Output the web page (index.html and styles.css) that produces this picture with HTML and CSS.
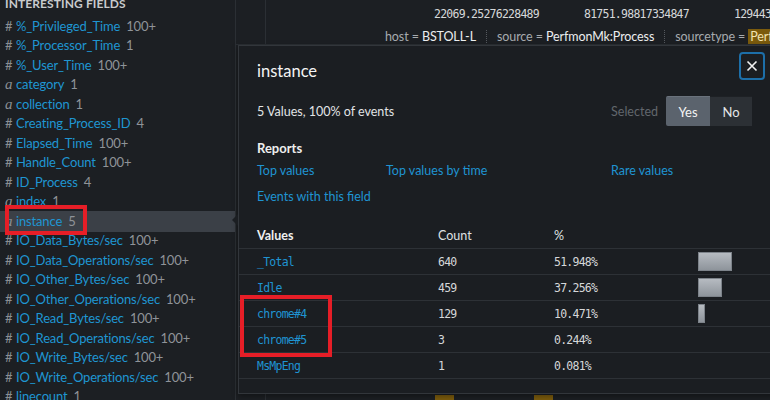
FILE: index.html
```html
<!DOCTYPE html>
<html>
<head>
<meta charset="utf-8">
<link rel="stylesheet" href="styles.css">
</head>
<body>
<div class="app">
  <aside class="sidebar">
    <div class="sb-title">Interesting Fields</div>
    <ul class="fields">
      <li class="field"><span class="ftype">#</span><span class="fname">%_Privileged_Time</span><span class="fcount">100+</span></li>
      <li class="field"><span class="ftype">#</span><span class="fname">%_Processor_Time</span><span class="fcount">1</span></li>
      <li class="field"><span class="ftype">#</span><span class="fname">%_User_Time</span><span class="fcount">100+</span></li>
      <li class="field"><span class="ftype str">a</span><span class="fname">category</span><span class="fcount">1</span></li>
      <li class="field"><span class="ftype str">a</span><span class="fname">collection</span><span class="fcount">1</span></li>
      <li class="field"><span class="ftype">#</span><span class="fname">Creating_Process_ID</span><span class="fcount">4</span></li>
      <li class="field"><span class="ftype">#</span><span class="fname">Elapsed_Time</span><span class="fcount">100+</span></li>
      <li class="field"><span class="ftype">#</span><span class="fname">Handle_Count</span><span class="fcount">100+</span></li>
      <li class="field"><span class="ftype">#</span><span class="fname">ID_Process</span><span class="fcount">4</span></li>
      <li class="field"><span class="ftype str">a</span><span class="fname">index</span><span class="fcount">1</span></li>
      <li class="field selected"><span class="ftype str">a</span><span class="fname">instance</span><span class="fcount">5</span><span class="annot annot-side"></span></li>
      <li class="field"><span class="ftype">#</span><span class="fname">IO_Data_Bytes/sec</span><span class="fcount">100+</span></li>
      <li class="field"><span class="ftype">#</span><span class="fname">IO_Data_Operations/sec</span><span class="fcount">100+</span></li>
      <li class="field"><span class="ftype">#</span><span class="fname">IO_Other_Bytes/sec</span><span class="fcount">100+</span></li>
      <li class="field"><span class="ftype">#</span><span class="fname">IO_Other_Operations/sec</span><span class="fcount">100+</span></li>
      <li class="field"><span class="ftype">#</span><span class="fname">IO_Read_Bytes/sec</span><span class="fcount">100+</span></li>
      <li class="field"><span class="ftype">#</span><span class="fname">IO_Read_Operations/sec</span><span class="fcount">100+</span></li>
      <li class="field"><span class="ftype">#</span><span class="fname">IO_Write_Bytes/sec</span><span class="fcount">100+</span></li>
      <li class="field"><span class="ftype">#</span><span class="fname">IO_Write_Operations/sec</span><span class="fcount">100+</span></li>
      <li class="field"><span class="ftype">#</span><span class="fname">linecount</span><span class="fcount">1</span></li>
    </ul>
  </aside>

  <main class="main">
    <div class="event">
      <div class="gutter"></div>
      <div class="event-body">
        <div class="nums">
          <span class="num">22069.25276228489</span>
          <span class="num">81751.98817334847</span>
          <span class="num">129443</span>
        </div>
        <div class="meta">
          <span class="kv"><span class="k">host = </span><span class="v">BSTOLL-L</span></span>
          <span class="sep"></span>
          <span class="kv"><span class="k">source = </span><span class="v">PerfmonMk:Process</span></span>
          <span class="sep"></span>
          <span class="kv"><span class="k">sourcetype = </span><span class="v hl">PerfmonMk</span></span>
        </div>
      </div>
    </div>
    <div class="event event-low">
      <div class="gutter"></div>
      <div class="event-body">
        <div class="hl-row"><span class="hl-block"></span><span class="hl-block"></span></div>
      </div>
    </div>

    <section class="popup">
      <div class="pop-head">
        <h2 class="pop-title">instance</h2>
        <button class="close" aria-label="Close">
          <svg width="12" height="12" viewBox="0 0 12 12"><path d="M1.5 1.5 L10.5 10.5 M10.5 1.5 L1.5 10.5" stroke="#f2f2f2" stroke-width="1.6" fill="none"/></svg>
        </button>
      </div>
      <div class="pop-sub">
        <span class="summary">5 Values, 100% of events</span>
        <div class="sel">
          <span class="sel-label">Selected</span>
          <div class="seg">
            <span class="seg-btn on">Yes</span>
            <span class="seg-btn">No</span>
          </div>
        </div>
      </div>
      <h3 class="reports-title">Reports</h3>
      <div class="reports">
        <a class="link">Top values</a>
        <a class="link">Top values by time</a>
        <a class="link">Rare values</a>
        <a class="link">Events with this field</a>
      </div>
      <div class="vtable">
        <div class="vrow vhead"><span class="vh-name">Values</span><span>Count</span><span>%</span><span></span></div>
        <div class="vrow"><span class="val">_Total</span><span class="mono">640</span><span class="mono">51.948%</span><span class="barcell"><span class="bar" style="width:34px"></span></span></div>
        <div class="vrow"><span class="val">Idle</span><span class="mono">459</span><span class="mono">37.256%</span><span class="barcell"><span class="bar" style="width:24px"></span></span></div>
        <div class="vrow"><span class="val">chrome#4</span><span class="mono">129</span><span class="mono">10.471%</span><span class="barcell"><span class="bar" style="width:7px"></span></span></div>
        <div class="vrow"><span class="val">chrome#5</span><span class="mono">3</span><span class="mono">0.244%</span><span class="barcell"></span></div>
        <div class="vrow"><span class="val">MsMpEng</span><span class="mono">1</span><span class="mono">0.081%</span><span class="barcell"></span></div>
      </div>
      <span class="annot annot-pop"></span>
    </section>
  </main>
</div>
</body>
</html>
```
FILE: styles.css
```css
* { box-sizing: border-box; }
html, body {
  margin: 0;
  padding: 0;
  width: 770px;
  height: 400px;
  overflow: hidden;
  background: #1c1f23;
  font-family: "Lato", "Open Sans", sans-serif;
  color: #e6e6e6;
}
.app {
  display: flex;
  height: 400px;
}

/* Sidebar */
.sidebar {
  position: relative;
  width: 236px;
  flex: none;
  border-right: 1px solid #2b2f34;
  padding-left: 5px;
}
.sb-title {
  margin-top: -4px;
  margin-bottom: 4.5px;
  height: 16px;
  line-height: 16px;
  font-size: 12px;
  font-weight: 700;
  text-transform: uppercase;
  color: #c9cbcd;
  letter-spacing: 0.1px;
}
.fields {
  list-style: none;
  margin: 0;
  padding: 0;
}
.field {
  position: relative;
  display: flex;
  align-items: baseline;
  height: 19.5px;
  line-height: 19.5px;
  font-size: 13px;
  letter-spacing: -0.15px;
  white-space: nowrap;
}
.field.selected {
  background: #3b4047;
  margin-left: -5px;
  padding-left: 5px;
  box-shadow: 0 -1px 0 #3b4047, 0 1px 0 #3b4047;
}
.ftype {
  width: 11px;
  flex: none;
  color: #8b8f94;
  font-size: 13px;
}
.ftype.str {
  font-family: "Liberation Serif", serif;
  font-style: italic;
  font-size: 15px;
}
.fname {
  color: #1f96d2;
}
.fcount {
  color: #8f9398;
  margin-left: 6px;
}

.annot {
  position: absolute;
  border: 4px solid #e61e27;
  pointer-events: none;
}
.annot-side {
  left: 5px;
  top: -7px;
  width: 82px;
  height: 30px;
}

/* Main */
.main {
  position: relative;
  flex: 1;
  min-width: 0;
}
.event {
  display: flex;
  height: 45px;
  border-bottom: 1px solid #2b2f34;
}
.event-low {
  height: 355px;
  border-bottom: 0;
}
.gutter {
  width: 30px;
  flex: none;
  border-right: 1px solid #2b2f34;
}
.event-body {
  flex: 1;
  min-width: 0;
  white-space: nowrap;
  overflow: hidden;
}
.nums {
  display: flex;
  padding-left: 168px;
  margin-top: 5px;
  height: 18px;
  line-height: 18px;
}
.num {
  width: 150px;
  flex: none;
  font-family: "DejaVu Sans Mono", monospace;
  font-size: 11.5px;
  letter-spacing: -0.75px;
  color: #d6d8da;
}
.meta {
  display: flex;
  align-items: center;
  padding-left: 119px;
  margin-top: 5px;
  height: 16px;
  font-size: 12.5px;
  letter-spacing: -0.1px;
}
.k { color: #a7abaf; }
.v { color: #eceeef; }
.v.hl {
  background: #7b5b0d;
  color: #f2e3b3;
  padding: 0 2px;
}
.sep {
  width: 0;
  height: 13px;
  border-left: 1px dotted #55595e;
  margin: 0 10px;
}
.hl-row {
  display: flex;
  padding-left: 169px;
  padding-top: 350px;
  gap: 80px;
}
.hl-block {
  width: 19px;
  height: 6px;
  background: #7b5b0d;
}

/* Popup */
.popup {
  position: absolute;
  left: 2px;
  top: 45px;
  width: 540px;
  height: 349px;
  background: #1b1e22;
  border: 1px solid #32363b;
  box-shadow: 0 2px 6px rgba(0,0,0,0.4);
}
.popup::before {
  content: "";
  position: absolute;
  left: -7px;
  top: 168px;
  border-style: solid;
  border-width: 6px 6px 6px 0;
  border-color: transparent #1b1e22 transparent transparent;
}
.pop-head {
  display: flex;
  justify-content: space-between;
  align-items: flex-start;
  padding: 6px 12px 0 18px;
  height: 34px;
}
.pop-title {
  margin: 9px 0 0;
  font-size: 16.5px;
  font-weight: 400;
  line-height: 20px;
  color: #f4f4f4;
}
.close {
  width: 26px;
  height: 28px;
  padding: 0;
  display: flex;
  align-items: center;
  justify-content: center;
  background: #1b1e22;
  border: 2px solid #1d6fa9;
  border-radius: 4px;
}
.pop-sub {
  display: flex;
  justify-content: space-between;
  align-items: center;
  margin-top: 16px;
  padding: 0 25px 0 18px;
  height: 30px;
}
.summary {
  font-size: 12.5px;
  color: #e2e4e6;
}
.sel {
  display: flex;
  align-items: center;
  gap: 8px;
}
.sel-label {
  font-size: 12.5px;
  color: #62676d;
}
.seg {
  display: flex;
  height: 30px;
}
.seg-btn {
  display: flex;
  align-items: center;
  justify-content: center;
  width: 42px;
  font-size: 13px;
  background: #2c3035;
  color: #e4e6e8;
  border-top: 1px solid #1e2125;
}
.seg-btn.on {
  width: 44px;
  background: #5b636d;
  color: #f4f4f4;
  border-radius: 2px 0 0 2px;
  border-top: 1px solid #6a727c;
}
.reports-title {
  margin: 13px 0 0;
  padding-left: 18px;
  font-size: 13px;
  font-weight: 700;
  line-height: 18px;
  color: #eeeeee;
}
.reports {
  display: grid;
  grid-template-columns: 129px 225px auto;
  row-gap: 7.5px;
  padding-left: 18px;
  margin-top: 5px;
}
.link {
  font-size: 12.5px;
  line-height: 18px;
  color: #1f94d2;
  white-space: nowrap;
}
.vtable {
  margin-top: 18px;
}
.vrow {
  display: grid;
  grid-template-columns: 181px 116px 144px 1fr;
  align-items: center;
  height: 26px;
  padding-left: 18px;
  border-bottom: 1px solid #2d3136;
}
.vhead {
  height: 25px;
  font-size: 12.5px;
  color: #dfe1e3;
}
.vh-name {
  font-weight: 700;
  color: #f0f0f0;
}
.val, .mono {
  font-family: "DejaVu Sans Mono", monospace;
  font-size: 11.5px;
  letter-spacing: -0.75px;
}
.val { color: #1f94d2; }
.mono { color: #d5d7d9; }
.barcell {
  display: flex;
  align-items: center;
  height: 26px;
}
.bar {
  display: block;
  height: 19px;
  background: linear-gradient(#b6bbc1, #8e949b);
  border: 1px solid #7d838a;
}
.annot-pop {
  left: 1px;
  top: 249px;
  width: 92px;
  height: 62px;
}
```
